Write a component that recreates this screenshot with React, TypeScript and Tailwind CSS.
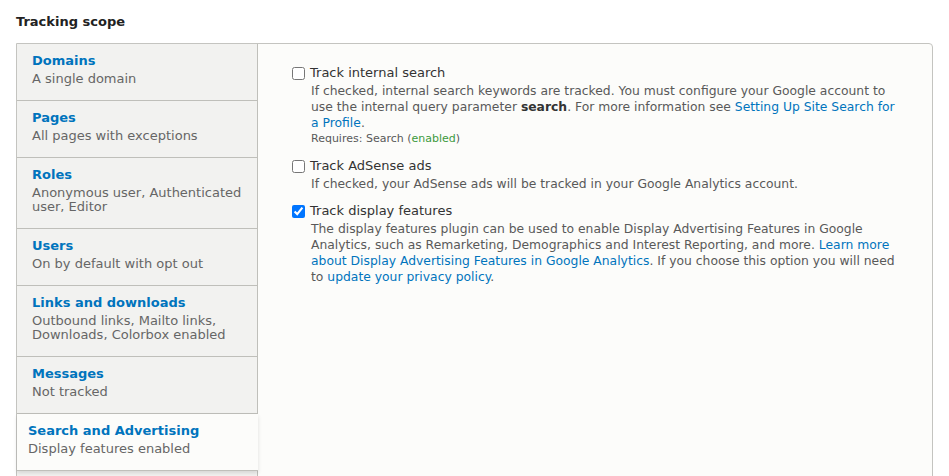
import React from 'react';

type Tab = { title: string; summary: string; selected?: boolean };

const tabs: Tab[] = [
  { title: 'Domains', summary: 'A single domain' },
  { title: 'Pages', summary: 'All pages with exceptions' },
  { title: 'Roles', summary: 'Anonymous user, Authenticated user, Editor' },
  { title: 'Users', summary: 'On by default with opt out' },
  { title: 'Links and downloads', summary: 'Outbound links, Mailto links, Downloads, Colorbox enabled' },
  { title: 'Messages', summary: 'Not tracked' },
  { title: 'Search and Advertising', summary: 'Display features enabled', selected: true },
  { title: 'Privacy', summary: 'Anonymize IP' },
];

const TabItem: React.FC<{ tab: Tab }> = ({ tab }) => (
  <li
    className={
      tab.selected
        ? 'relative z-10 -mr-px border-b border-[#bfbfba] bg-[#fcfcfa] pl-[11px] pr-2 pt-2 pb-[14px] shadow-[0_2px_4px_rgba(0,0,0,0.12)]'
        : 'border-b border-[#bfbfba] bg-[#f2f2f0] pl-[15px] pr-2 pt-2 pb-[14px]'
    }
  >
    <a className="block text-[13px] font-bold leading-[18px] text-[#0074bd]">{tab.title}</a>
    <div className="mt-[2px] text-[13px] leading-[14px] text-[#666]">{tab.summary}</div>
  </li>
);

const Option: React.FC<{ label: string; checked?: boolean; children: React.ReactNode }> = ({ label, checked, children }) => (
  <div>
    <label className="flex items-center gap-[5px] text-[13px] leading-[18px] text-[#333]">
      <input type="checkbox" defaultChecked={checked} className="h-[13px] w-[13px]" />
      {label}
    </label>
    <div className="mt-px pl-[19px] text-[12.35px] leading-4 text-[#595959]">{children}</div>
  </div>
);

export default function App() {
  return (
    <div className="h-[476px] overflow-hidden bg-white px-4 pt-[13px]" style={{ fontFamily: '"DejaVu Sans", Verdana, sans-serif' }}>
      <h2 className="text-[13px] font-bold leading-[18px] text-[#222]">Tracking scope</h2>
      <div className="mt-3 flex h-[600px] rounded-tr-[4px] border border-[#c4c4c0] bg-[#fcfcfa]">
        <ul className="w-[241px] shrink-0 border-r border-[#bfbfba] bg-[#f2f2f0]">
          {tabs.map((t) => (
            <TabItem key={t.title} tab={t} />
          ))}
        </ul>
        <div className="flex flex-1 flex-col gap-[10px] pl-[34px] pr-[32px] pt-5">
          <Option label="Track internal search">
            <p>
              If checked, internal search keywords are tracked. You must configure your Google account to use the
              internal query parameter <strong className="text-[#333]">search</strong>. For more information see{' '}
              <a className="text-[#0074bd]">Setting Up Site Search for a Profile</a>.
            </p>
            <p className="text-[11px] leading-4">
              Requires: Search (<span className="text-[#3d9a3d]">enabled</span>)
            </p>
          </Option>
          <Option label="Track AdSense ads">
            <p>If checked, your AdSense ads will be tracked in your Google Analytics account.</p>
          </Option>
          <Option label="Track display features" checked>
            <p>
              The display features plugin can be used to enable Display Advertising Features in Google Analytics, such as
              Remarketing, Demographics and Interest Reporting, and more.{' '}
              <a className="text-[#0074bd]">Learn more about Display Advertising Features in Google Analytics</a>. If you
              choose this option you will need to <a className="text-[#0074bd]">update your privacy policy</a>.
            </p>
          </Option>
        </div>
      </div>
    </div>
  );
}
